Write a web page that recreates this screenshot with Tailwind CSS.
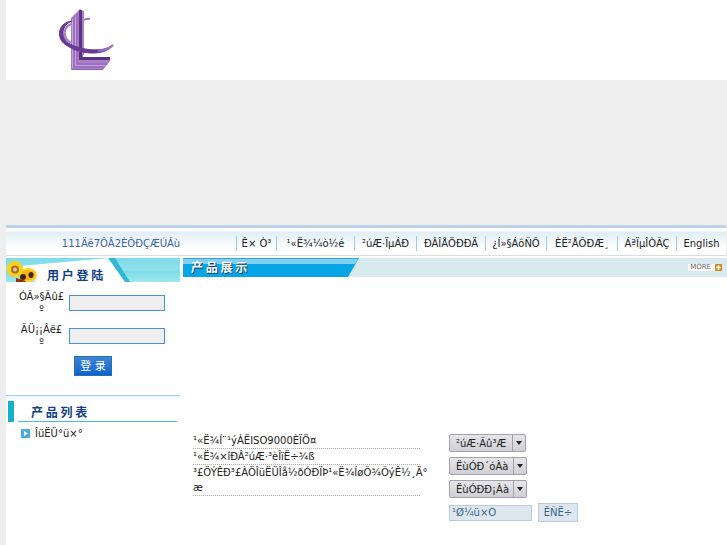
<!DOCTYPE html>
<html lang="zh">
<head>
    <meta charset="UTF-8">
    <meta name="viewport" content="width=device-width, initial-scale=1.0">
    <title>产品展示</title>
    <script src="https://cdn.jsdelivr.net/npm/@tailwindcss/browser@4"></script>
</head>
<body class="bg-[#eeeeee] min-h-screen flex flex-col pl-1.5 font-['DejaVu_Sans','Noto_Sans_CJK_SC',sans-serif] text-[10px] leading-[15px] text-[#222222]">
    <!-- Logo -->
    <header class="bg-white h-20 pl-[50px] pt-2">
        <svg class="w-16 h-16" viewBox="0 0 64 64" fill="none">
            <path d="M15 10 L24 1 L27 3 V49 H54 L54 53 L47 62 H15Z" fill="#a77fc6"/>
            <path d="M18 9 V59 H48 M21 6 V56 H51 M16 61.500 H47" stroke="#9163b8" stroke-width="1"/>
            <path d="M16.500 11 V60 M19.500 9 V57.500 H49" stroke="#c4a4dc" stroke-width="1"/>
            <path d="M24.500 2 V50.500 H54" stroke="#5c3380" stroke-width="3"/>
            <path d="M27 3 V47" stroke="#a77fc6" stroke-width="2"/>
            <path d="M16 13 C0 15 0 33 12 38 C22 46 49 49 57 37 C47 45 25 42 14 36 C4 30 5 17 16 13Z" fill="#683a93" stroke="#683a93" stroke-width="1"/>
            <path d="M15 16 C7 20 6 29 15 35" stroke="#a77fc6" stroke-width="2"/>
            <path d="M42 43 Q52 42 57 37" stroke="#9b70c1" stroke-width="2"/>
            <path d="M28 12 Q31 10 34 11" stroke="#9b70c1" stroke-width="2"/>
        </svg>
    </header>

    <!-- Banner -->
    <div class="h-[145px]"></div>

    <!-- Navigation -->
    <nav class="bg-white pb-0.5 mr-px">
        <div class="h-[3px] bg-[#bdd3e9]"></div>
        <div class="h-1 border-b border-[#edf4f8]"></div>
        <div class="grid grid-cols-[230px_40fr_78fr_62fr_69fr_61fr_71fr_59fr_50fr] items-center text-center whitespace-nowrap h-6 border-b border-[#dddddd] bg-linear-to-b from-[#e0eef5] to-white to-70%">
            <span class="text-[#3a62b0]">111Äê7ÔÂ2ÈÕÐÇÆÚÁù</span>
            <a href="#" class="border-l border-[#98ccee]">Ê× Ò³</a>
            <a href="#" class="border-l border-[#98ccee]">¹«Ë¾¼ò½é</a>
            <a href="#" class="border-l border-[#98ccee]">²úÆ·ÏµÁÐ</a>
            <a href="#" class="border-l border-[#98ccee]">ÐÂÎÅÖÐÐÄ</a>
            <a href="#" class="border-l border-[#98ccee]">¿Í»§ÁôÑÔ</a>
            <a href="#" class="border-l border-[#98ccee]">ÈË²ÅÕÐÆ¸</a>
            <a href="#" class="border-l border-[#98ccee]">ÁªÏµÎÒÃÇ</a>
            <a href="#" class="border-l border-[#98ccee]">English</a>
        </div>
    </nav>

    <main class="bg-white flex grow gap-[3px]">
        <!-- Sidebar -->
        <aside class="w-[174px] shrink-0">
            <div class="relative h-6">
                <svg class="absolute inset-0 w-full h-full" viewBox="0 0 174 24">
                    <defs>
                        <linearGradient id="aqua" x2="0" y2="1">
                            <stop offset="0" stop-color="#7edbe8"/>
                            <stop offset="0.500" stop-color="#90e2ed"/>
                            <stop offset="0.550" stop-color="#7fdbe7"/>
                            <stop offset="1" stop-color="#9ce8f0"/>
                        </linearGradient>
                    </defs>
                    <rect width="174" height="24" fill="url(#aqua)"/>
                    <path d="M14 8 L103 0 L123 24 H30Z" fill="#ffffff"/>
                    <path d="M102 0 H109 L124 24 H119Z" fill="#32b8d4"/>
                    <circle cx="9" cy="11" r="7" fill="#fbd51c" stroke="#f9cf1a" stroke-width="3" stroke-dasharray="3 1"/>
                    <circle cx="9" cy="11.500" r="4" fill="#b06a18"/>
                    <circle cx="9" cy="11.500" r="2" fill="#d8c9ae"/>
                    <ellipse cx="22" cy="17" rx="8" ry="6" fill="#f7b51a" stroke="#fbd51c" stroke-width="2"/>
                    <ellipse cx="17" cy="19" rx="3" ry="3" fill="#4a230b"/>
                    <ellipse cx="25" cy="17" rx="2.500" ry="3" fill="#4a230b"/>
                    <path d="M10 20 L20 23 L19 24 H10Z" fill="#9b2b12"/>
                </svg>
                <h2 class="relative pl-[41px] pt-2 font-['Noto_Sans_CJK_SC',sans-serif] text-xs leading-[18px] font-bold text-[#123f85]">用 户 登 陆</h2>
            </div>
            <form class="pt-2 h-[113px] text-center leading-[13px]">
                <div class="flex items-center mb-[7px]">
                    <label for="username" class="w-[63px] pl-2">ÓÃ»§Ãû£<br>º</label>
                    <input id="username" type="text" class="w-24 h-4 px-1 bg-[#eeeeee] border border-[#4a90d9]">
                </div>
                <div class="flex items-center">
                    <label for="password" class="w-[63px] pl-2">ÃÜ¡¡Âë£<br>º</label>
                    <input id="password" type="password" class="w-24 h-4 px-1 bg-[#eeeeee] border border-[#4a90d9]">
                </div>
                <button type="submit" class="mt-[7px] w-[38px] h-5 border border-[#2a6cbc] bg-linear-to-b from-[#3d85d4] to-[#0763cb] text-[11px] text-white">登 录</button>
            </form>

            <div class="border-t border-[#a9cdec] h-1.5 bg-linear-to-b from-[#edf3f8] to-white"></div>
            <div class="flex pl-0.5 gap-1">
                <div class="w-1.5 h-[21px] bg-[#14b0ce]"></div>
                <h2 class="grow h-[21px] mr-[3px] pl-[13px] pt-0.5 border-b border-b-[#45c0dc] font-['Noto_Sans_CJK_SC',sans-serif] text-xs leading-[18px] font-bold text-[#123f85]">产 品 列 表</h2>
            </div>
            <ul class="pl-[15px] pt-1">
                <li class="flex items-center gap-[5px]">
                    <svg class="w-[9px] h-[9px]" viewBox="0 0 9 9"><rect width="9" height="9" rx="1" fill="#45ade2"/><path d="M3 2 L7 4.500 L3 7Z" fill="#ffffff"/></svg>
                    <a href="#">ÎüËÜ°ü×°</a>
                </li>
            </ul>
        </aside>

        <!-- Products -->
        <section class="grow">
            <div class="relative flex justify-between items-start h-[19px] bg-[#d9eaee]">
                <svg class="absolute left-0 top-0 w-44 h-[19px]" viewBox="0 0 176 19">
                    <path d="M0 0 H176 L165 19 H0Z" fill="#05a5e6"/>
                    <path d="M0 1 H175 L172 6 H0Z" fill="#84cff0"/>
                    <path d="M0 0.500 H176" stroke="#2ba9df"/>
                </svg>
                <h2 class="relative pl-2 font-['Noto_Sans_CJK_SC',sans-serif] text-xs leading-[18px] font-bold text-white [text-shadow:1px_1px_0_#173a5c]">产 品 展 示</h2>
                <a href="#" class="flex items-center gap-1 h-[7px] mr-[5px] mt-1.5 pl-0.5 bg-white text-[7px] leading-[7px] text-[#666666]">MORE
                    <svg class="w-[7px] h-[7px]" viewBox="0 0 7 7"><rect width="7" height="7" rx="1" fill="#e07f12"/><path d="M3.500 1 V6 M1 3.500 H6" stroke="#ffffff" stroke-width="1.500"/></svg>
                </a>
            </div>

            <div class="flex gap-[29px] pl-2.5 pt-[156px]">
                <ul class="w-[227px]">
                    <li class="border-b border-dotted border-[#aaaaaa]">¹«Ë¾Í¨¹ýÁËISO9000ÈÏÖ¤</li>
                    <li class="border-b border-dotted border-[#aaaaaa]">¹«Ë¾×îÐÂ²úÆ·³èÎïË÷¾ß</li>
                    <li class="border-b border-dotted border-[#aaaaaa] whitespace-nowrap">³£ÖÝÊÐ³£ÀÖÎüËÜÎå½ðÓÐÏÞ¹«Ë¾ÍøÕ¾ÕýÊ½¸Ä°<br>æ</li>
                </ul>

                <!-- Search -->
                <form class="flex flex-col items-start gap-[5px] pt-px">
                    <div class="relative">
                        <select aria-label="²úÆ·Ãû³Æ" class="appearance-none w-[77px] h-[18px] pl-1.5 rounded-xs border border-[#a2a2a8] bg-linear-to-b from-[#e6e6ea] to-[#cfcfd5]">
                            <option>²úÆ·Ãû³Æ</option>
                        </select>
                        <svg class="absolute right-0 top-0 w-3.5 h-[18px] pointer-events-none" viewBox="0 0 14 18"><path d="M0.500 1 V17" stroke="#a2a2a8"/><path d="M4 7 H10 L7 11Z" fill="#222222"/></svg>
                    </div>
                    <div class="relative">
                        <select aria-label="ËùÓÐ´óÀà" class="appearance-none w-[78px] h-[18px] pl-1.5 rounded-xs border border-[#a2a2a8] bg-linear-to-b from-[#e6e6ea] to-[#cfcfd5]">
                            <option>ËùÓÐ´óÀà</option>
                        </select>
                        <svg class="absolute right-0 top-0 w-3.5 h-[18px] pointer-events-none" viewBox="0 0 14 18"><path d="M0.500 1 V17" stroke="#a2a2a8"/><path d="M4 7 H10 L7 11Z" fill="#222222"/></svg>
                    </div>
                    <div class="relative">
                        <select aria-label="ËùÓÐÐ¡Àà" class="appearance-none w-[78px] h-[18px] pl-1.5 rounded-xs border border-[#a2a2a8] bg-linear-to-b from-[#e6e6ea] to-[#cfcfd5]">
                            <option>ËùÓÐÐ¡Àà</option>
                        </select>
                        <svg class="absolute right-0 top-0 w-3.5 h-[18px] pointer-events-none" viewBox="0 0 14 18"><path d="M0.500 1 V17" stroke="#a2a2a8"/><path d="M4 7 H10 L7 11Z" fill="#222222"/></svg>
                    </div>
                    <div class="flex items-center gap-1.5">
                        <input type="text" aria-label="¹Ø¼ü×Ö" value="¹Ø¼ü×Ö" class="w-[83px] h-4 px-0.5 border border-[#b5cbe0] bg-[#dfe6ef] text-[#336688]">
                        <button type="submit" class="w-10 h-[19px] border border-[#b5cbe0] bg-[#dfe6ef] text-[#336688]">ËÑË÷</button>
                    </div>
                </form>
            </div>
        </section>
    </main>
</body>
</html>
